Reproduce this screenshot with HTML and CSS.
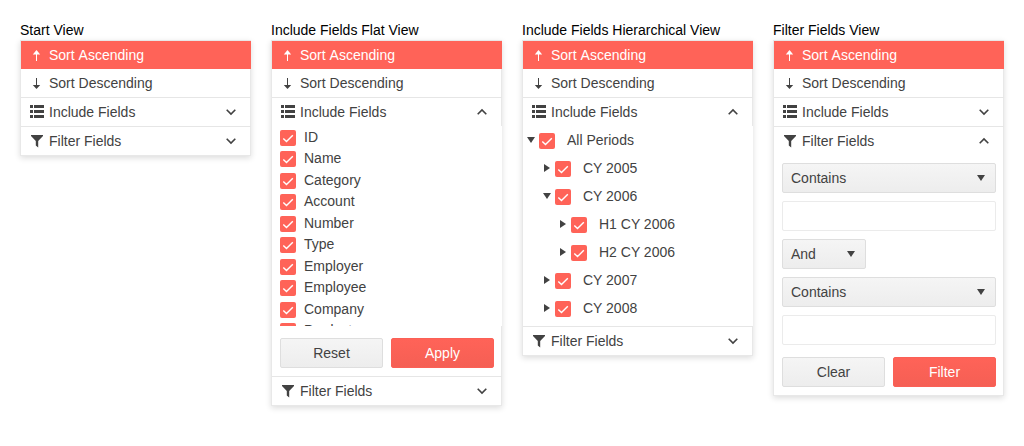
FILE: index.html
```html
<!DOCTYPE html>
<html lang="en">
<head>
<meta charset="utf-8">
<title>Column Menu</title>
<link rel="stylesheet" href="styles.css">
</head>
<body>
<svg class="defs" aria-hidden="true">
  <symbol id="up" viewBox="0 0 16 16"><path d="M7.5 3 L11.2 7.5 H8 V14 H7 V7.5 H3.8 Z"/></symbol>
  <symbol id="down" viewBox="0 0 16 16"><path d="M7.5 14 L11.2 10 H8 V3 H7 V10 H3.8 Z"/></symbol>
  <symbol id="list" viewBox="0 0 16 16"><path d="M1 1h3v3H1zM5 1h10v3H5zM1 6h3v3H1zM5 6h10v3H5zM1 11h3v3H1zM5 11h10v3H5z"/></symbol>
  <symbol id="funnel" viewBox="0 0 16 16"><path d="M2 2H14V3L9.2 8V14.6L6.8 12.6V8L2 3Z"/></symbol>
  <symbol id="chev-down" viewBox="0 0 16 16"><path class="line" d="M3.7 5.7 L8 10 L12.3 5.7"/></symbol>
  <symbol id="chev-up" viewBox="0 0 16 16"><path class="line" d="M3.7 10.3 L8 6 L12.3 10.3"/></symbol>
  <symbol id="tri-down" viewBox="0 0 16 16"><path d="M4 5H12L8 11Z"/></symbol>
  <symbol id="tri-right" viewBox="0 0 16 16"><path d="M5 4V12L11 8Z"/></symbol>
  <symbol id="check" viewBox="0 0 16 16"><path class="tick" d="M3.3 8.4 L6.5 11.6 L12.8 5.2"/></symbol>
</svg>
<main class="views">
  <section class="view">
    <div class="title">Start View</div>
    <div class="menu">
      <div class="item selected"><svg class="icon"><use href="#up"/></svg><span>Sort Ascending</span></div>
      <div class="item"><svg class="icon"><use href="#down"/></svg><span>Sort Descending</span></div>
      <div class="item ruled"><svg class="icon"><use href="#list"/></svg><span>Include Fields</span><svg class="icon toggle"><use href="#chev-down"/></svg></div>
      <div class="item ruled"><svg class="icon"><use href="#funnel"/></svg><span>Filter Fields</span><svg class="icon toggle"><use href="#chev-down"/></svg></div>
    </div>
  </section>

  <section class="view">
    <div class="title">Include Fields Flat View</div>
    <div class="menu">
      <div class="item selected"><svg class="icon"><use href="#up"/></svg><span>Sort Ascending</span></div>
      <div class="item"><svg class="icon"><use href="#down"/></svg><span>Sort Descending</span></div>
      <div class="item ruled"><svg class="icon"><use href="#list"/></svg><span>Include Fields</span><svg class="icon toggle"><use href="#chev-up"/></svg></div>
      <div class="fields">
        <label class="field"><svg class="box"><use href="#check"/></svg><span>ID</span></label>
        <label class="field"><svg class="box"><use href="#check"/></svg><span>Name</span></label>
        <label class="field"><svg class="box"><use href="#check"/></svg><span>Category</span></label>
        <label class="field"><svg class="box"><use href="#check"/></svg><span>Account</span></label>
        <label class="field"><svg class="box"><use href="#check"/></svg><span>Number</span></label>
        <label class="field"><svg class="box"><use href="#check"/></svg><span>Type</span></label>
        <label class="field"><svg class="box"><use href="#check"/></svg><span>Employer</span></label>
        <label class="field"><svg class="box"><use href="#check"/></svg><span>Employee</span></label>
        <label class="field"><svg class="box"><use href="#check"/></svg><span>Company</span></label>
        <label class="field"><svg class="box"><use href="#check"/></svg><span>Product</span></label>
      </div>
      <div class="actions"><div class="button">Reset</div><div class="button primary">Apply</div></div>
      <div class="item ruled"><svg class="icon"><use href="#funnel"/></svg><span>Filter Fields</span><svg class="icon toggle"><use href="#chev-down"/></svg></div>
    </div>
  </section>

  <section class="view">
    <div class="title">Include Fields Hierarchical View</div>
    <div class="menu">
      <div class="item selected"><svg class="icon"><use href="#up"/></svg><span>Sort Ascending</span></div>
      <div class="item"><svg class="icon"><use href="#down"/></svg><span>Sort Descending</span></div>
      <div class="item ruled"><svg class="icon"><use href="#list"/></svg><span>Include Fields</span><svg class="icon toggle"><use href="#chev-up"/></svg></div>
      <div class="tree">
        <div class="node"><svg class="icon"><use href="#tri-down"/></svg><svg class="box"><use href="#check"/></svg><span>All Periods</span></div>
        <div class="node level1"><svg class="icon"><use href="#tri-right"/></svg><svg class="box"><use href="#check"/></svg><span>CY 2005</span></div>
        <div class="node level1"><svg class="icon"><use href="#tri-down"/></svg><svg class="box"><use href="#check"/></svg><span>CY 2006</span></div>
        <div class="node level2"><svg class="icon"><use href="#tri-right"/></svg><svg class="box"><use href="#check"/></svg><span>H1 CY 2006</span></div>
        <div class="node level2"><svg class="icon"><use href="#tri-right"/></svg><svg class="box"><use href="#check"/></svg><span>H2 CY 2006</span></div>
        <div class="node level1"><svg class="icon"><use href="#tri-right"/></svg><svg class="box"><use href="#check"/></svg><span>CY 2007</span></div>
        <div class="node level1"><svg class="icon"><use href="#tri-right"/></svg><svg class="box"><use href="#check"/></svg><span>CY 2008</span></div>
      </div>
      <div class="item ruled"><svg class="icon"><use href="#funnel"/></svg><span>Filter Fields</span><svg class="icon toggle"><use href="#chev-down"/></svg></div>
    </div>
  </section>

  <section class="view">
    <div class="title">Filter Fields View</div>
    <div class="menu">
      <div class="item selected"><svg class="icon"><use href="#up"/></svg><span>Sort Ascending</span></div>
      <div class="item"><svg class="icon"><use href="#down"/></svg><span>Sort Descending</span></div>
      <div class="item ruled"><svg class="icon"><use href="#list"/></svg><span>Include Fields</span><svg class="icon toggle"><use href="#chev-down"/></svg></div>
      <div class="item ruled"><svg class="icon"><use href="#funnel"/></svg><span>Filter Fields</span><svg class="icon toggle"><use href="#chev-up"/></svg></div>
      <div class="filter">
        <div class="select"><span>Contains</span><svg class="icon"><use href="#tri-down"/></svg></div>
        <div class="input"></div>
        <div class="select short"><span>And</span><svg class="icon"><use href="#tri-down"/></svg></div>
        <div class="select"><span>Contains</span><svg class="icon"><use href="#tri-down"/></svg></div>
        <div class="input"></div>
      </div>
      <div class="actions filter-actions"><div class="button">Clear</div><div class="button primary">Filter</div></div>
    </div>
  </section>
</main>
</body>
</html>
```
FILE: styles.css
```css
* { box-sizing: border-box; }
body {
  margin: 0;
  background: #fff;
  color: #424242;
  font: 14px/20px "Liberation Sans", Arial, sans-serif;
}
.defs { display: none; }
.views { display: flex; align-items: flex-start; gap: 20px; padding: 20px; }
.view { width: 231px; flex: none; }
.title { color: #000; white-space: nowrap; }
.menu {
  border: 1px solid #e8e8e8;
  background: #fff;
  box-shadow: 0 2px 6px rgba(0, 0, 0, .14);
}
.item {
  display: flex;
  align-items: center;
  gap: 4px;
  width: 230px;
  height: 28px;
  padding: 0 12px 0 8px;
}
.ruled { height: 29px; border-top: 1px solid #e6e6e6; }
.selected { background: #ff6358; color: #fff; word-spacing: .8px; }
.icon { width: 16px; height: 16px; flex: none; fill: currentColor; }
.line { fill: none; stroke: currentColor; stroke-width: 1.6; }
.toggle { margin-left: auto; }
.box { width: 16px; height: 16px; flex: none; border-radius: 2px; background: #ff6358; }
.tick { fill: none; stroke: #fff; stroke-width: 1.4; }

.fields { position: relative; width: 230px; height: 200px; padding: .9px 8px 0; overflow: hidden; background: #fff; }
.field { display: flex; align-items: flex-start; gap: 8px; height: 21.5px; }
.field .box { margin-top: 3px; }

.actions { display: flex; gap: 8px; padding: 12px 7px 8px 8px; }
.button {
  flex: 1;
  height: 30px;
  border: 1px solid #dedede;
  border-radius: 2px;
  background: linear-gradient(#f5f5f5, #ededed);
  line-height: 28px;
  text-align: center;
}
.primary { border-color: #fb6056; background: linear-gradient(#ff6358, #f55f54); color: #fff; }

.tree { width: 230px; height: 200px; background: #fff; }
.node { display: flex; align-items: center; height: 28px; }
.node .box { margin: 2px 12px 0 0; }
.level1 { padding-left: 16px; }
.level2 { padding-left: 32px; }

.filter { display: flex; flex-direction: column; gap: 8px; padding: 8px 7px 0 8px; }
.select, .input { height: 30px; border: 1px solid #dedede; border-radius: 2px; }
.select {
  display: flex;
  align-items: center;
  justify-content: space-between;
  padding: 0 6px 0 8px;
  background: linear-gradient(#f5f5f5, #ededed);
}
.short { width: 84px; }
.input { border-color: #ebebeb; }
```
